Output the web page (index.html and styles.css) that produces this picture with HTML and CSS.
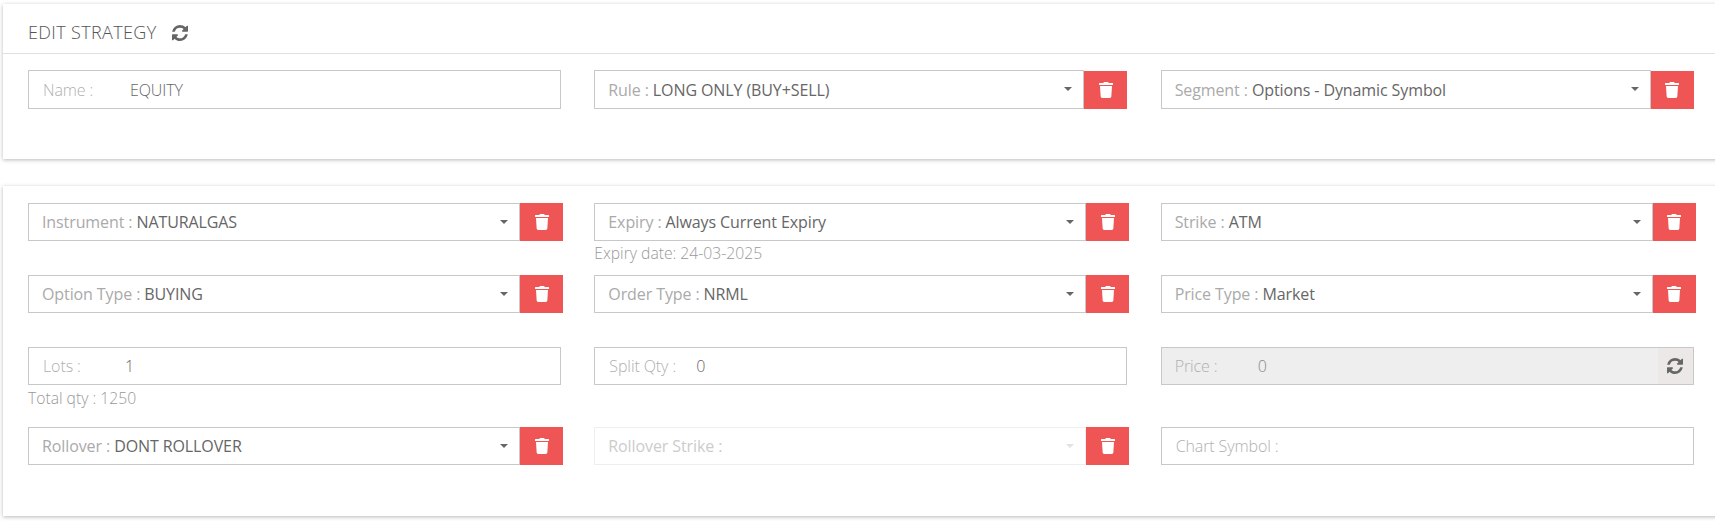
FILE: index.html
```html
<!DOCTYPE html>
<html lang="en">
<head>
  <meta charset="UTF-8">
  <meta name="viewport" content="width=device-width, initial-scale=1.0">
  <link rel="stylesheet" href="styles.css">
  <title>Edit Strategy</title>
</head>
<body>
  <svg class="icon-defs" width="0" height="0" aria-hidden="true">
    <symbol id="icon-trash" viewBox="0 0 448 512">
      <path d="M432 32H312l-9.4-18.7A24 24 0 0 0 281.1 0H166.8a23.72 23.72 0 0 0-21.4 13.3L136 32H16A16 16 0 0 0 0 48v32a16 16 0 0 0 16 16h416a16 16 0 0 0 16-16V48a16 16 0 0 0-16-16zM53.2 467a48 48 0 0 0 47.9 45h245.8a48 48 0 0 0 47.9-45L416 128H32z"/>
    </symbol>
    <symbol id="icon-refresh" viewBox="128 128 1536 1536">
      <path d="M1639 1056q0 5-1 7-64 268-268 434.5t-478 166.5q-146 0-282.5-55t-243.5-157l-129 129q-19 19-45 19t-45-19-19-45v-448q0-26 19-45t45-19h448q26 0 45 19t19 45-19 45l-137 137q71 66 161 102t187 36q134 0 250-65t186-179q11-17 53-117 8-23 30-23h192q13 0 22.5 9.5t9.5 22.5zm25-800v448q0 26-19 45t-45 19h-448q-26 0-45-19t-19-45 19-45l138-138q-148-137-349-137-134 0-250 65t-186 179q-11 17-53 117-8 23-30 23h-199q-13 0-22.5-9.5t-9.5-22.5v-7q65-268 270-434.5t480-166.5q146 0 284 55.5t245 156.5l130-129q19-19 45-19t45 19 19 45z"/>
    </symbol>
  </svg>

  <div class="card card-top">
    <div class="card-header">
      <h1>EDIT STRATEGY</h1>
      <svg class="icon-refresh"><use href="#icon-refresh"/></svg>
    </div>
    <div class="form-grid">
      <div class="cell">
        <div class="text-field tall"><span class="input-label name-label">Name :</span><span class="field-value">EQUITY</span></div>
      </div>
      <div class="cell">
        <div class="select-group tall">
          <div class="select-box"><span class="field-label">Rule :&nbsp;</span><span class="select-value">LONG ONLY (BUY+SELL)</span><i class="caret"></i></div>
          <button class="btn-delete"><svg class="icon-trash"><use href="#icon-trash"/></svg></button>
        </div>
      </div>
      <div class="cell">
        <div class="select-group tall">
          <div class="select-box"><span class="field-label">Segment :&nbsp;</span><span class="select-value">Options - Dynamic Symbol</span><i class="caret"></i></div>
          <button class="btn-delete"><svg class="icon-trash"><use href="#icon-trash"/></svg></button>
        </div>
      </div>
    </div>
  </div>

  <div class="card card-bottom">
    <div class="form-grid rows">
      <div class="cell">
        <div class="select-group wide">
          <div class="select-box"><span class="field-label">Instrument :&nbsp;</span><span class="select-value">NATURALGAS</span><i class="caret"></i></div>
          <button class="btn-delete"><svg class="icon-trash"><use href="#icon-trash"/></svg></button>
        </div>
      </div>
      <div class="cell">
        <div class="select-group wide">
          <div class="select-box"><span class="field-label">Expiry :&nbsp;</span><span class="select-value">Always Current Expiry</span><i class="caret"></i></div>
          <button class="btn-delete"><svg class="icon-trash"><use href="#icon-trash"/></svg></button>
        </div>
        <p class="hint">Expiry date: 24-03-2025</p>
      </div>
      <div class="cell">
        <div class="select-group wide">
          <div class="select-box"><span class="field-label">Strike :&nbsp;</span><span class="select-value">ATM</span><i class="caret"></i></div>
          <button class="btn-delete"><svg class="icon-trash"><use href="#icon-trash"/></svg></button>
        </div>
      </div>

      <div class="cell">
        <div class="select-group wide">
          <div class="select-box"><span class="field-label">Option Type :&nbsp;</span><span class="select-value">BUYING</span><i class="caret"></i></div>
          <button class="btn-delete"><svg class="icon-trash"><use href="#icon-trash"/></svg></button>
        </div>
      </div>
      <div class="cell">
        <div class="select-group wide">
          <div class="select-box"><span class="field-label">Order Type :&nbsp;</span><span class="select-value">NRML</span><i class="caret"></i></div>
          <button class="btn-delete"><svg class="icon-trash"><use href="#icon-trash"/></svg></button>
        </div>
      </div>
      <div class="cell">
        <div class="select-group wide">
          <div class="select-box"><span class="field-label">Price Type :&nbsp;</span><span class="select-value">Market</span><i class="caret"></i></div>
          <button class="btn-delete"><svg class="icon-trash"><use href="#icon-trash"/></svg></button>
        </div>
      </div>

      <div class="cell">
        <div class="text-field"><span class="input-label lots-label">Lots :</span><span class="field-value">1</span></div>
        <p class="hint hint-qty">Total qty : 1250</p>
      </div>
      <div class="cell">
        <div class="text-field"><span class="input-label split-label">Split Qty :</span><span class="field-value">0</span></div>
      </div>
      <div class="cell">
        <div class="text-field readonly">
          <span class="input-label price-label">Price :</span><span class="field-value">0</span>
          <span class="addon"><svg class="icon-refresh"><use href="#icon-refresh"/></svg></span>
        </div>
      </div>

      <div class="cell">
        <div class="select-group wide">
          <div class="select-box"><span class="field-label">Rollover :&nbsp;</span><span class="select-value">DONT ROLLOVER</span><i class="caret"></i></div>
          <button class="btn-delete"><svg class="icon-trash"><use href="#icon-trash"/></svg></button>
        </div>
      </div>
      <div class="cell">
        <div class="select-group wide disabled">
          <div class="select-box"><span class="field-label">Rollover Strike :</span><i class="caret"></i></div>
          <button class="btn-delete"><svg class="icon-trash"><use href="#icon-trash"/></svg></button>
        </div>
      </div>
      <div class="cell">
        <div class="text-field"><span class="input-label">Chart Symbol :</span></div>
      </div>
    </div>
  </div>
</body>
</html>
```

FILE: styles.css
```css
* {
  box-sizing: border-box;
}

html,
body {
  overflow: hidden;
}

body {
  margin: 0;
  padding: 4px 0 0 3px;
  height: 521px;
  background-color: #fff;
  font-family: "Open Sans", sans-serif;
  font-size: 16px;
  letter-spacing: -0.1px;
  color: #666;
}

.icon-defs {
  position: absolute;
}

.card {
  margin-right: -10px;
  background-color: #fff;
  box-shadow: 0 1px 4px rgba(0, 0, 0, 0.28);
}

.card-top {
  height: 155px;
}

.card-bottom {
  height: 330px;
  margin-top: 27px;
  padding-top: 17px;
}

.card-header {
  display: flex;
  align-items: center;
  height: 50px;
  padding: 6px 0 0 25px;
  border-bottom: 1px solid #e0e0e0;
}

.card-header h1 {
  margin: 0;
  font-size: 18px;
  font-weight: 300;
  letter-spacing: 0.35px;
  color: #555;
}

.card-header .icon-refresh {
  width: 16px;
  height: 16px;
  margin: 3px 0 0 15px;
}

.icon-refresh {
  fill: #666;
}

.form-grid {
  display: grid;
  grid-template-columns: repeat(3, 536.67px);
  column-gap: 29.67px;
  padding-left: 25px;
}

.card-top .form-grid {
  padding-top: 16px;
}

.form-grid.rows {
  grid-template-rows: 72px 72px 80px 40px;
}

.cell {
  min-width: 0;
}

.text-field,
.select-box {
  display: flex;
  align-items: center;
  height: 38px;
  border: 1px solid #c8c8c8;
  background-color: #fff;
  white-space: nowrap;
}

.tall .select-box,
.text-field.tall {
  height: 39px;
}

.text-field {
  width: 532.5px;
  padding-left: 14px;
}

.cell:nth-child(3n) .text-field {
  width: 533px;
}

.field-label {
  color: #aaa;
  font-weight: 400;
}

.input-label {
  color: #b0b0b0;
  font-weight: 300;
}

.field-value {
  color: #666;
  font-weight: 300;
}

.name-label { width: 87px; }
.lots-label { width: 82px; }
.split-label { width: 87px; }
.price-label { width: 83px; }

.select-group {
  display: flex;
  width: 533px;
}

.select-group.wide {
  width: 535px;
}

.select-box {
  flex: 1;
  position: relative;
  padding-left: 13px;
}

.select-value {
  color: #666;
}

.caret {
  position: absolute;
  right: 11px;
  top: 16px;
  border-style: solid;
  border-width: 4px 4px 0;
  border-color: #666 transparent transparent;
}

.btn-delete {
  display: flex;
  align-items: center;
  justify-content: center;
  flex: none;
  width: 43px;
  padding: 0;
  border: none;
  background-color: #f05555;
}

.tall .btn-delete {
  margin-top: 1px;
}

.icon-trash {
  width: 14px;
  height: 16px;
  fill: #fff;
}

.hint {
  margin: 0;
  padding-top: 2px;
  font-weight: 300;
  font-size: 15.7px;
  letter-spacing: 0;
  line-height: 20px;
  color: #999;
}

.hint-qty {
  padding-top: 3px;
}

.readonly {
  position: relative;
  padding-left: 13px;
  background-color: #eee;
}

.readonly .field-value {
  color: #888;
}

.addon {
  position: absolute;
  top: 0;
  right: 0;
  bottom: 0;
  display: flex;
  align-items: center;
  justify-content: center;
  width: 35px;
  background-color: #ece8e8;
}

.addon .icon-refresh {
  width: 16px;
  height: 16px;
}

.disabled .select-box {
  border-color: #eee;
}

.disabled .field-label {
  color: #ccc;
  font-weight: 400;
}

.disabled .caret {
  border-top-color: #e2e2e2;
}
```
